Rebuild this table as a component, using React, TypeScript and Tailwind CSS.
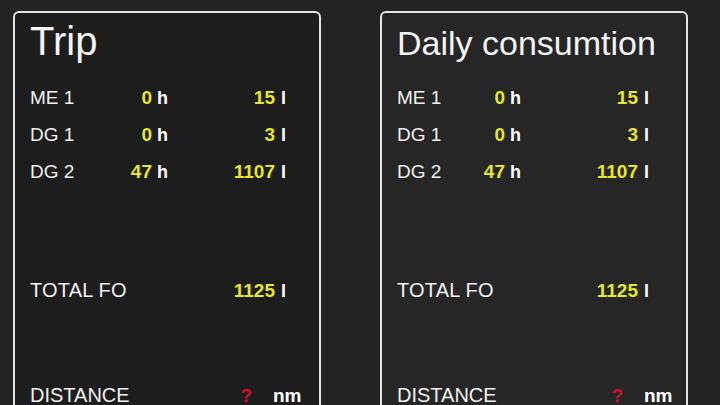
type Row = { label: string; hours: string; liters: string };

const rows: Row[] = [
  { label: "ME 1", hours: "0", liters: "15" },
  { label: "DG 1", hours: "0", liters: "3" },
  { label: "DG 2", hours: "47", liters: "1107" },
];

type CardProps = {
  title: string;
  titleClass: string;
  cardClass: string;
  hoursW: string;
  litersW: string;
  distW: string;
};

const Card = ({ title, titleClass, cardClass, hoursW, litersW, distW }: CardProps) => {
  return (
    <div className={`w-[308px] h-[420px] shrink-0 rounded-[6px] border-2 border-[#e4e4e4] pl-[15px] ${cardClass}`}>
      <div className={`h-[66px] whitespace-nowrap text-[#f4f4f4] ${titleClass}`}>{title}</div>
      {rows.map((r) => (
        <div key={r.label} className="flex items-baseline h-[37px] leading-[37px]">
          <div className="w-[75px] shrink-0 text-[19px] text-[#f0f0f0]">{r.label}</div>
          <div className={`${hoursW} shrink-0 text-right text-[19px] font-bold text-[#e6e62c]`}>{r.hours}</div>
          <div className="ml-[5px] text-[18px] font-bold text-white">h</div>
          <div className={`${litersW} shrink-0 text-right text-[19px] font-bold text-[#e6e62c]`}>{r.liters}</div>
          <div className="ml-[6px] text-[18px] font-bold text-white">l</div>
        </div>
      ))}
      <div className="h-[82px]" />
      <div className="flex items-baseline h-[37px] leading-[37px]">
        <div className="w-[75px] shrink-0 whitespace-nowrap text-[20px] tracking-[0.2px] text-[#f0f0f0]">TOTAL FO</div>
        <div className={`${hoursW} shrink-0`} />
        <div className="ml-[5px] text-[18px] font-bold invisible">h</div>
        <div className={`${litersW} shrink-0 text-right text-[19px] font-bold text-[#e6e62c]`}>1125</div>
        <div className="ml-[6px] text-[18px] font-bold text-white">l</div>
      </div>
      <div className="h-[68px]" />
      <div className="flex items-baseline h-[37px] leading-[37px]">
        <div className="w-[75px] shrink-0 whitespace-nowrap text-[20px] text-[#f0f0f0]">DISTANCE</div>
        <div className={`${distW} shrink-0 text-right text-[19px] font-bold text-[#d01020]`}>?</div>
        <div className="ml-[21px] text-[19px] font-bold text-white">nm</div>
      </div>
    </div>
  );
};

export default function App() {
  return (
    <div
      className="w-[720px] h-[405px] overflow-hidden bg-[#232323] flex gap-[59px] pl-[13px] pt-[11px]"
      style={{ fontFamily: '"Liberation Sans", Arial, sans-serif' }}
    >
      <Card
        title="Trip"
        titleClass="pt-[4px] text-[40px] leading-[48px]"
        cardClass="bg-[#1d1d1d]"
        hoursW="w-[47px]"
        litersW="w-[107px]"
        distW="w-[147px]"
      />
      <Card
        title="Daily consumtion"
        titleClass="pt-[6px] text-[34px] leading-[48px]"
        cardClass="bg-[#262626]"
        hoursW="w-[33px]"
        litersW="w-[117px]"
        distW="w-[151px]"
      />
    </div>
  );
}
